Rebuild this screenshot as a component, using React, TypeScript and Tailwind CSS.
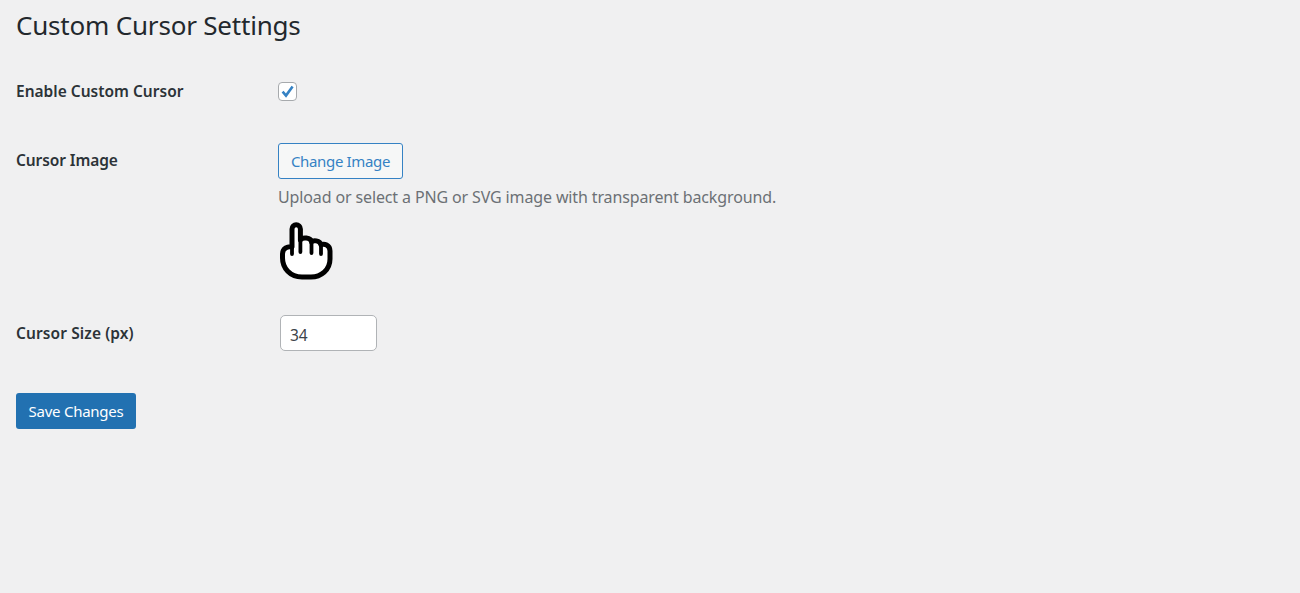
export default function App() {
  const font = { fontFamily: '"Noto Sans", sans-serif' };
  return (
    <div className="min-h-[593px] bg-[#f0f0f1] text-[#1d2327] pl-4 font-['Noto_Sans',sans-serif]" style={font}>
      <h1 className="text-[26px] leading-[33px] font-normal pt-[9px] tracking-[-0.2px] text-[#23282d]">Custom Cursor Settings</h1>
      <div className="flex mt-[29px] h-[50px]">
        <div className="w-[262px] text-[15.5px] leading-[40px] font-semibold text-[#2c3338]">Enable Custom Cursor</div>
        <div className="pt-[11px]">
          <div className="w-[19px] h-[19px] bg-white border border-[#a7aaad] rounded-[4px] flex items-center justify-center">
            <svg width="15" height="15" viewBox="0 0 15 15"><path d="M2.6 7.6 L6 11.6 L12.6 2.6" fill="none" stroke="#3582c4" strokeWidth="2.6" /></svg>
          </div>
        </div>
      </div>
      <div className="flex mt-[22px]">
        <div className="w-[262px] text-[15.5px] leading-[34px] font-semibold text-[#2c3338] tracking-[-0.1px]">Cursor Image</div>
        <div>
          <button className="w-[125px] h-[36px] border border-[#3582c4] rounded-[3px] bg-[#f6f7f7] text-[#3582c4] text-[15px] tracking-[-0.35px]">Change Image</button>
          <p className="text-[16px] leading-[22px] mt-[7px] text-[#6c7075] tracking-[-0.13px]">Upload or select a PNG or SVG image with transparent background.</p>
          <svg width="80" height="70" viewBox="0 0 80 70" className="block ml-[-14px] mt-[7px]">
            <path d="M28 32 V14 a4.200 4.200 0 0 1 8.400 0 V25 C38 22 47 22 47.500 27 C49 25 56 25 57 30 C60 28 66 30 66 36 V44 C66 55 57 62 47 62 H38 C26 62 18.500 53 18.500 43 V39 C18.500 33 24 31 28 32 Z" fill="white" stroke="black" strokeWidth="5" strokeLinejoin="round" />
            <path d="M28 32 V39 M36.400 25 V37 M47.500 27 V38 M57 30 V39" fill="none" stroke="black" strokeWidth="3.800" strokeLinecap="round" />
          </svg>
        </div>
      </div>
      <div className="flex mt-[30px]">
        <div className="w-[262px] text-[15.5px] leading-[36px] font-semibold text-[#2c3338] tracking-[0.1px]">Cursor Size (px)</div>
        <input readOnly value="34" className="ml-[2px] w-[97px] h-[36px] bg-white border border-[#b0b3b6] rounded-[5px] pl-[9px] pt-[3px] text-[15.5px] text-[#3c434a] outline-none" />
      </div>
      <button className="block mt-[42px] w-[120px] h-[36px] bg-[#2271b1] rounded-[3px] text-white text-[15px] tracking-[-0.25px]">Save Changes</button>
    </div>
  );
}
